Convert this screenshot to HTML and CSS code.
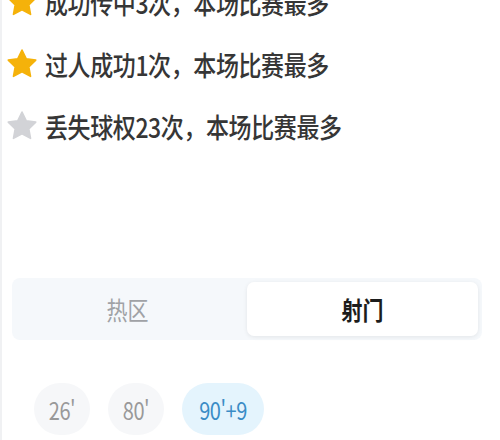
FILE: index.html
```html
<!DOCTYPE html>
<html lang="zh">
<head>
<meta charset="utf-8">
<link rel="stylesheet" href="styles.css">
</head>
<body>
<div class="page">
  <ul class="list">
    <li class="item"><svg class="star" viewBox="0 0 24 24"><path class="gold" d="M12 1.5l3.2 6.6 7.1 1-5.2 5 1.3 7.2L12 17.9l-6.4 3.4 1.3-7.2-5.2-5 7.1-1z"/></svg><span class="t">成功传中3次，本场比赛最多</span></li>
    <li class="item"><svg class="star" viewBox="0 0 24 24"><path class="gold" d="M12 1.5l3.2 6.6 7.1 1-5.2 5 1.3 7.2L12 17.9l-6.4 3.4 1.3-7.2-5.2-5 7.1-1z"/></svg><span class="t">过人成功1次，本场比赛最多</span></li>
    <li class="item"><svg class="star" viewBox="0 0 24 24"><path class="grey" d="M12 1.5l3.2 6.6 7.1 1-5.2 5 1.3 7.2L12 17.9l-6.4 3.4 1.3-7.2-5.2-5 7.1-1z"/></svg><span class="t">丢失球权23次，本场比赛最多</span></li>
  </ul>
  <div class="tabs">
    <div class="tab plain"><span class="t">热区</span></div>
    <div class="tab active"><span class="t">射门</span></div>
  </div>
  <div class="chips">
    <div class="chip"><span class="t">26'</span></div>
    <div class="chip"><span class="t">80'</span></div>
    <div class="chip sel"><span class="t">90'+9</span></div>
  </div>
</div>
</body>
</html>
```
FILE: styles.css
```css
html, body { margin: 0; padding: 0; background: #fff; }
body { width: 500px; height: 440px; overflow: hidden; font-family: "Noto Sans CJK SC", "Noto Sans", sans-serif; }
.page { border-left: 2px solid #f0f1f3; height: 440px; box-sizing: border-box; display: flow-root; }
.t { display: inline-block; transform: scaleY(1.2); }
.list { list-style: none; margin: 0; padding: 0; margin-top: -29px; }
.item { display: flex; align-items: center; height: 62px; padding-left: 4px; color: #363636; font-size: 23px; font-weight: 500; letter-spacing: -0.4px; }
.star { width: 32px; height: 32px; margin-right: 7px; flex: none; }
.gold { fill: #f5b20a; stroke: #f5b20a; stroke-width: 1.2; stroke-linejoin: round; }
.grey { fill: #d2d3d7; stroke: #d2d3d7; stroke-width: 1.2; stroke-linejoin: round; }
.tabs { display: flex; margin: 121px 18px 0 10px; background: #f5f8fb; border-radius: 8px; height: 62px; padding: 4px; box-sizing: border-box; }
.tab { flex: 0 0 50%; box-sizing: border-box; display: flex; align-items: center; justify-content: center; font-size: 21px; color: #a0a2a6; border-radius: 7px; }
.tab.plain { padding-right: 8px; }
.tab.active { background: #fff; color: #1c1c1c; font-weight: bold; box-shadow: 0 1px 4px rgba(0,0,0,0.08); }
.chips { display: flex; gap: 18px; margin: 43px 0 0 32px; }
.chip { height: 52px; min-width: 56px; padding: 0 8px; box-sizing: border-box; border-radius: 26px; background: #f6f7f9; color: #999; display: flex; align-items: center; justify-content: center; font-size: 20px; letter-spacing: -0.5px; }
.chip.sel { background: #e4f4fd; color: #3a8cc6; min-width: 82px; }
```
